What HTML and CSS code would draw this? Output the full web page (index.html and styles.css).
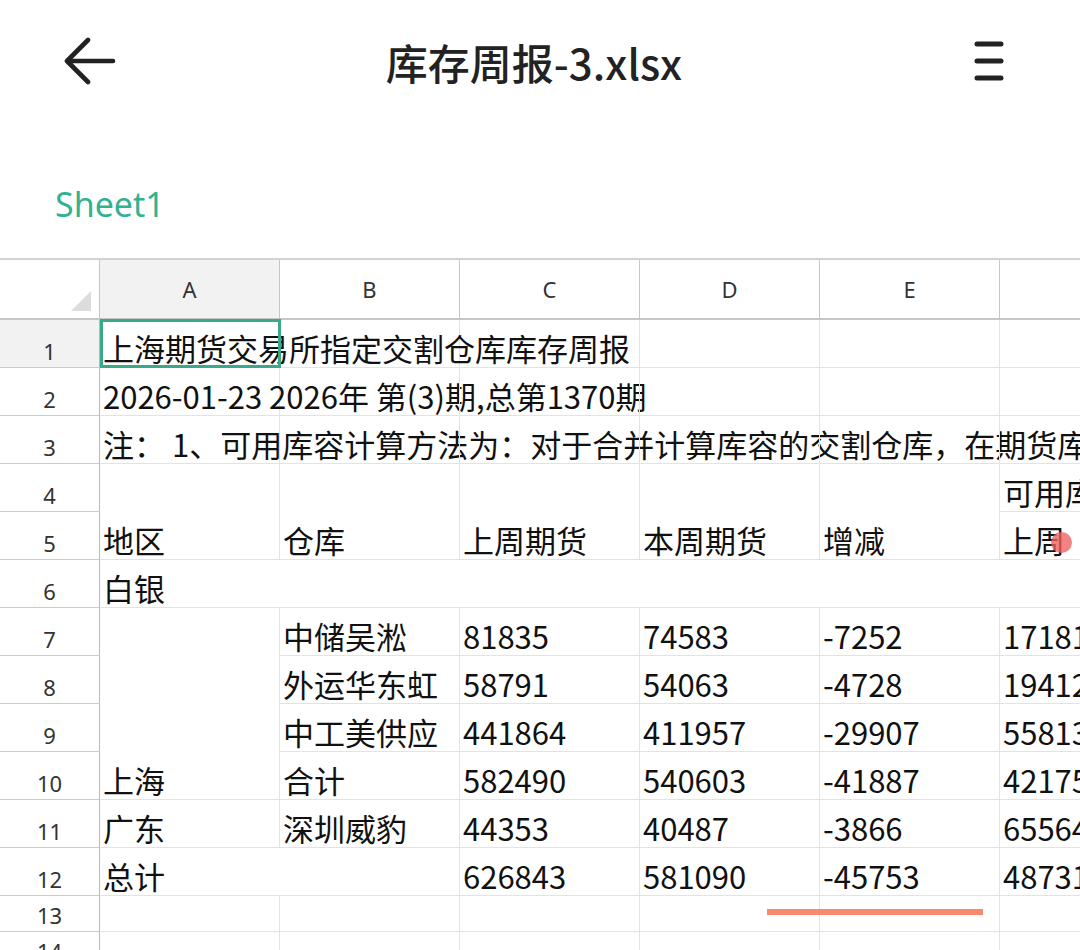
FILE: index.html
```
<!DOCTYPE html>
<html lang="zh-CN">
<head>
<meta charset="utf-8">
<title>库存周报-3.xlsx</title>
<link rel="stylesheet" href="styles.css">
</head>
<body>
<header class="topbar">
  <svg class="back" viewBox="0 0 52 48" aria-hidden="true">
    <path d="M4 24 H49 M24 3 L3 24 L24 45" fill="none" stroke="#222" stroke-width="4.6" stroke-linecap="round" stroke-linejoin="round"/>
  </svg>
  <h1 class="title">库存周报-3.xlsx</h1>
  <svg class="menu" viewBox="0 0 30 44" aria-hidden="true">
    <path d="M3 5 H27 M3 22 H27 M3 39 H27" fill="none" stroke="#222" stroke-width="5" stroke-linecap="round"/>
  </svg>
</header>

<nav class="tabs"><span class="tab">Sheet1</span></nav>

<section class="sheet">
  <div class="grid">
    <div class="c ch corner"><svg class="tri" viewBox="0 0 20 20"><path d="M0 20 L20 0 L20 20 Z" fill="#dcdcdc"/></svg></div>
    <div class="c ch hl">A</div>
    <div class="c ch">B</div>
    <div class="c ch">C</div>
    <div class="c ch">D</div>
    <div class="c ch">E</div>
    <div class="c ch">F</div>

    <div class="c rh hl">1</div>
    <div class="c sel">上海期货交易所指定交割仓库库存周报</div>
    <div class="c"></div><div class="c"></div><div class="c"></div><div class="c"></div><div class="c"></div>

    <div class="c rh">2</div>
    <div class="c">2026-01-23 2026年 第(3)期,总第1370期</div>
    <div class="c"></div><div class="c"></div><div class="c"></div><div class="c"></div><div class="c"></div>

    <div class="c rh">3</div>
    <div class="c">注： 1、可用库容计算方法为：对于合并计算库容的交割仓库，在期货库存</div>
    <div class="c"></div><div class="c"></div><div class="c"></div><div class="c"></div><div class="c"></div>

    <div class="c rh">4</div>
    <div class="c r2">地区</div>
    <div class="c r2">仓库</div>
    <div class="c r2">上周期货</div>
    <div class="c r2">本周期货</div>
    <div class="c r2">增减</div>
    <div class="c">可用库容</div>

    <div class="c rh">5</div>
    <div class="c">上周</div>

    <div class="c rh">6</div>
    <div class="c c6">白银</div>

    <div class="c rh">7</div>
    <div class="c r4">上海</div>
    <div class="c">中储吴淞</div><div class="c">81835</div><div class="c">74583</div><div class="c">-7252</div><div class="c">17181</div>

    <div class="c rh">8</div>
    <div class="c">外运华东虹</div><div class="c">58791</div><div class="c">54063</div><div class="c">-4728</div><div class="c">19412</div>

    <div class="c rh">9</div>
    <div class="c">中工美供应</div><div class="c">441864</div><div class="c">411957</div><div class="c">-29907</div><div class="c">55813</div>

    <div class="c rh">10</div>
    <div class="c">合计</div><div class="c">582490</div><div class="c">540603</div><div class="c">-41887</div><div class="c">42175</div>

    <div class="c rh">11</div>
    <div class="c">广东</div><div class="c">深圳威豹</div><div class="c">44353</div><div class="c">40487</div><div class="c">-3866</div><div class="c">65564</div>

    <div class="c rh">12</div>
    <div class="c c2">总计</div><div class="c">626843</div><div class="c">581090</div><div class="c">-45753</div><div class="c">48731</div>

    <div class="c rh">13</div>
    <div class="c"></div><div class="c"></div><div class="c"></div><div class="c"></div><div class="c"></div><div class="c"></div>

    <div class="c rh">14</div>
    <div class="c"></div><div class="c"></div><div class="c"></div><div class="c"></div><div class="c"></div><div class="c"></div>
  </div>
</section>

<div class="touch-dot"></div>
<div class="swipe-line"></div>
</body>
</html>
```
FILE: styles.css
```
* { box-sizing: border-box; }
html, body { margin: 0; padding: 0; }
body {
  width: 1080px;
  height: 950px;
  overflow: hidden;
  position: relative;
  background: #fff;
  color: #111;
  font-family: "Noto Sans CJK SC", "Noto Sans", sans-serif;
}

.topbar {
  height: 128px;
  display: grid;
  grid-template-columns: 1fr auto 1fr;
  align-items: center;
  padding: 0 76px 0 64px;
}
.back { width: 52px; height: 48px; display: block; margin-top: -6px; }
.title {
  margin: -4px 0 0;
  font-size: 42px;
  line-height: 1;
  font-weight: 500;
  color: #222;
}
.menu { justify-self: end; width: 30px; height: 44px; display: block; margin-top: -6px; }

.tabs {
  height: 130px;
  padding: 56px 0 0 55px;
}
.tab {
  font-family: "Noto Sans", sans-serif;
  font-size: 34px;
  line-height: 40px;
  color: #33b28f;
}

.sheet {
  border-top: 2px solid #d2d2d2;
  overflow: hidden;
}
.grid {
  display: grid;
  width: 1180px;
  grid-template-columns: 100px repeat(6, 180px);
  grid-template-rows: 60px repeat(12, 48px) 36px 36px;
}
.c {
  display: flex;
  align-items: flex-end;
  min-width: 0;
  padding: 0 0 4px 3px;
  border-right: 1px solid #e3e3e3;
  border-bottom: 1px solid #e3e3e3;
  font-size: 31px;
  line-height: 31px;
  white-space: nowrap;
  color: #111;
}
.ch {
  align-items: center;
  justify-content: center;
  padding: 0;
  border-right: 1px solid #c6c6c6;
  border-bottom: 2px solid #c6c6c6;
  font-family: "Noto Sans", sans-serif;
  font-size: 22px;
  line-height: 22px;
  color: #333;
}
.corner { justify-content: flex-end; align-items: flex-end; padding: 0 8px 7px 0; }
.tri { width: 20px; height: 20px; display: block; }
.rh {
  justify-content: center;
  padding: 0 0 5px;
  border-right: 1px solid #b9b9b9;
  border-bottom: 1px solid #cbcbcb;
  font-family: "Noto Sans", sans-serif;
  font-size: 22px;
  line-height: 22px;
  color: #333;
}
.hl { background: #f2f2f2; }
.r2 { grid-row: span 2; }
.r4 { grid-row: span 4; }
.c2 { grid-column: span 2; }
.c6 { grid-column: span 6; }

.sel { position: relative; }
.sel::after {
  content: "";
  position: absolute;
  left: 0;
  top: -1px;
  right: -2px;
  bottom: -1px;
  border: 3px solid #3aa88a;
  pointer-events: none;
}

.touch-dot {
  position: absolute;
  left: 1051px;
  top: 532px;
  width: 21px;
  height: 21px;
  border-radius: 50%;
  background: rgba(240, 96, 96, 0.78);
}
.swipe-line {
  position: absolute;
  left: 767px;
  top: 909px;
  width: 216px;
  height: 6px;
  background: #f58a6e;
}
```
